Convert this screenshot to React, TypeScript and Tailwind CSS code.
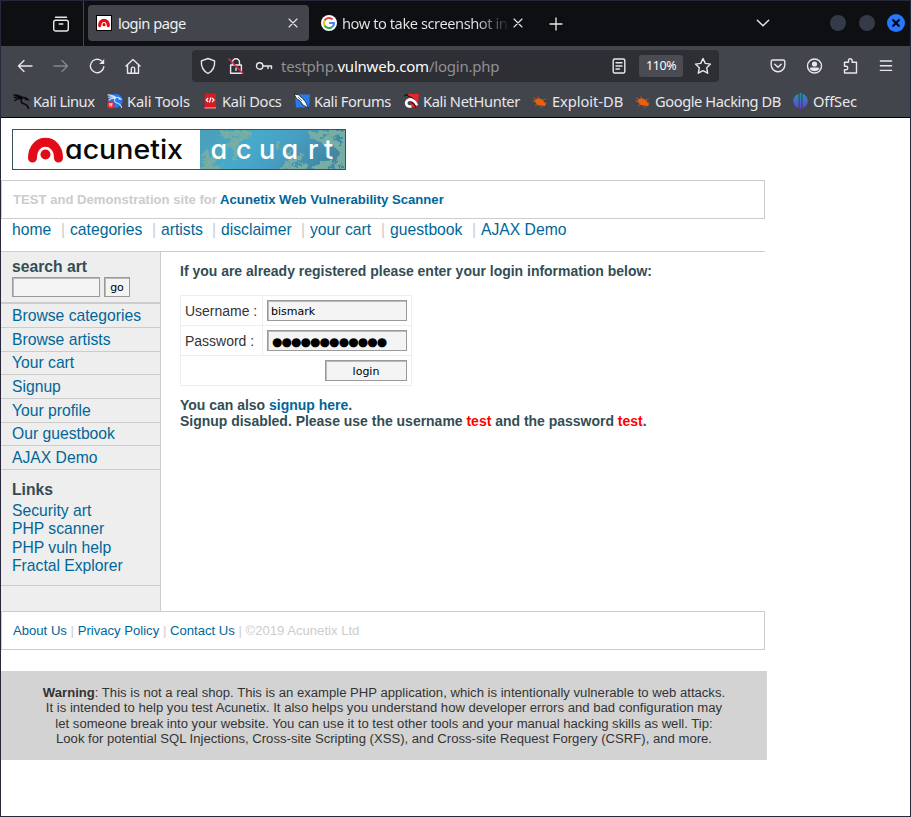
import React from "react";

const UI = "font-['Noto_Sans',sans-serif]";
const ARIAL = "font-['Liberation_Sans',Arial,sans-serif]";

type IconProps = { children: React.ReactNode; className?: string; size?: number };

function Icon({ children, className = "text-[#e8e8ea]", size = 18 }: IconProps) {
  return (
    <svg
      width={size}
      height={size}
      viewBox="0 0 18 18"
      fill="none"
      stroke="currentColor"
      strokeWidth="1.4"
      strokeLinecap="round"
      strokeLinejoin="round"
      className={"shrink-0 " + className}
    >
      {children}
    </svg>
  );
}

function Close() {
  return (
    <Icon>
      <path d="M5 5l8 8M13 5l-8 8" strokeWidth="1.1" />
    </Icon>
  );
}

function AcunetixFavicon() {
  return (
    <svg width="16" height="16" viewBox="0 0 16 16" className="shrink-0">
      <rect width="16" height="16" fill="#000" />
      <rect x="1" y="1" width="14" height="14" fill="#fff" />
      <path d="M3.7 10.6C3.7 3.5 12.3 3.5 12.3 10.6" fill="none" stroke="#e20d18" strokeWidth="3.2" strokeLinecap="round" />
      <circle cx="8" cy="9.7" r="1.6" fill="#e20d18" />
    </svg>
  );
}

function GoogleIcon() {
  return (
    <svg width="16" height="16" viewBox="0 0 16 16" className="shrink-0">
      <circle cx="8" cy="8" r="8" fill="#fff" />
      <g fill="none" strokeWidth="2.1">
        <path d="M3.6 5.5A5 5 0 0 1 11.6 4.5" stroke="#ea4335" />
        <path d="M3.6 10.5A5 5 0 0 1 3.6 5.5" stroke="#fbbc05" />
        <path d="M11.3 11.8A5 5 0 0 1 3.6 10.5" stroke="#34a853" />
        <path d="M8.2 8H13A5 5 0 0 1 11.3 11.8" stroke="#4285f4" />
      </g>
    </svg>
  );
}

function TabStrip() {
  return (
    <div className="flex h-[45px] items-start bg-[#0e0f13]">
      <div className="flex h-[45px] w-[83px] items-center justify-end border-r border-[#43454c] pr-[13px]">
        <Icon>
          <rect x="1.7" y="5.2" width="14.6" height="10.8" rx="2" />
          <path d="M3.5 2.2h11M7.2 9h3.6" />
        </Icon>
      </div>
      <div className="ml-1 mt-1 flex h-9 w-[221px] items-center rounded bg-[#43454c] pl-2 pr-[7px]">
        <AcunetixFavicon />
        <span className="ml-[6px] flex-1 whitespace-nowrap text-[14.67px] tracking-[-0.52px] text-[#f0f0f3]">login page</span>
        <Close />
      </div>
      <div className="ml-3 mt-1 flex h-9 w-[206px] items-center">
        <GoogleIcon />
        <span className="ml-[5px] w-[167px] whitespace-nowrap bg-gradient-to-r from-[#e9e9ec] from-80% to-[#1a1b1f] bg-clip-text text-[14.67px] tracking-[-0.45px] text-transparent">
          how to take screenshot in
        </span>
        <Close />
      </div>
      <div className="ml-5 flex h-[45px] items-center">
        <Icon>
          <path d="M9 3v12M3 9h12" strokeWidth="1.3" />
        </Icon>
      </div>
      <div className="ml-[189px] flex h-[43px] items-center">
        <Icon>
          <path d="M3.3 6.2l5.7 5.6 5.7-5.6" />
        </Icon>
      </div>
      <div className="ml-[58px] flex h-11 items-center gap-[13px]">
        <span className="size-4 rounded-full bg-[#343a47]" />
        <span className="size-4 rounded-full bg-[#343a47]" />
        <span className="-ml-[1px] flex size-[18px] items-center justify-center rounded-full bg-[#2777ff]">
          <svg width="10" height="10" viewBox="0 0 10 10" stroke="#050a18" strokeWidth="2.2">
            <path d="M1.5 1.5l7 7M8.5 1.5l-7 7" />
          </svg>
        </span>
      </div>
    </div>
  );
}

function Toolbar() {
  return (
    <div className="flex h-10 items-center pl-[15px]">
      <div className="flex w-[176px] items-center gap-[18px]">
        <Icon>
          <path d="M16 9H2.5M8 3.5L2.5 9 8 14.5" />
        </Icon>
        <Icon className="text-[#85868b]">
          <path d="M2 9h13.5M10 3.5L15.5 9 10 14.5" />
        </Icon>
        <Icon>
          <path d="M15.8 9.8A6.7 6.7 0 1 1 13.4 3.8" />
          <path d="M16.2 2v5h-5z" fill="currentColor" stroke="none" />
        </Icon>
        <Icon>
          <path d="M2 9l7-6.6L16 9M3.5 8v8.2h11V8M7.3 16v-4.2a1.7 1.7 0 0 1 3.4 0V16" />
        </Icon>
      </div>
      <div className="flex h-8 w-[527px] items-center rounded bg-[#2e2f34] pl-[7px]">
        <Icon>
          <path d="M9 1.5l6.6 2.3c.4 5.5-1.3 10-6.6 12.7C3.7 13.8 2 9.3 2.4 3.8z" />
        </Icon>
        <Icon className="ml-[10px] text-[#e8e8ea]">
          <path d="M5.5 8V5.2a3.5 3.5 0 0 1 7 0V8M3.6 8h10.8v8.3H3.6zM9 11.2v2" />
          <path d="M2 2l14 14.5" stroke="#e22850" strokeWidth="1.6" />
        </Icon>
        <Icon className="ml-[10px] text-[#e8e8ea]">
          <circle cx="4.7" cy="9" r="3.2" />
          <path d="M8 9h8.5v2.5M13 9v2.5" />
        </Icon>
        <span className="ml-[8px] w-[329px] whitespace-nowrap text-[15px] tracking-[-0.22px] text-[#8f9095]">
          testphp.<span className="text-[#fbfbfe]">vulnweb.com</span>/login.php
        </span>
        <Icon>
          <rect x="3.2" y="2" width="11.6" height="14" rx="1.5" />
          <path d="M6 5.8h6M6 9h6M6 12h3.5" />
        </Icon>
        <span className="ml-[11px] flex h-[22px] w-11 items-center justify-center rounded-[3px] bg-[#4b4c52] text-[12.5px] tracking-[-0.4px] text-[#fbfbfe]">110%</span>
        <Icon className="ml-[11px] text-[#e8e8ea]">
          <path d="M9 1.5l2.3 4.9 5.2.7-3.8 3.7 1 5.4L9 13.6l-4.7 2.6 1-5.4L1.5 7.1l5.2-.7z" />
        </Icon>
      </div>
      <div className="ml-[50px] flex items-center gap-[18px]">
        <Icon>
          <path d="M3.8 3h10.4a1.6 1.6 0 0 1 1.6 1.6V8a6.8 6.8 0 0 1-13.6 0V4.6A1.6 1.6 0 0 1 3.8 3zM5.8 7.2L9 10.3l3.2-3.1" />
        </Icon>
        <Icon>
          <circle cx="9.5" cy="9" r="7" />
          <circle cx="9.5" cy="7" r="2.6" fill="currentColor" stroke="none" />
          <path d="M4.8 12a1.5 1.5 0 0 1 1.5-1.4h6.4a1.5 1.5 0 0 1 1.5 1.4 6 6 0 0 1-9.4 0z" fill="currentColor" stroke="none" />
        </Icon>
        <Icon>
          <path d="M3.5 5.2h4V3.5a1.8 1.8 0 0 1 3.6 0v1.7h4.4V16h-12v-3.3h1.6a1.7 1.7 0 0 0 0-3.4H3.5z" />
        </Icon>
        <Icon>
          <path d="M3.4 4h11.2M3.4 8.7h11.2M3.4 13.4h11.2" />
        </Icon>
      </div>
    </div>
  );
}

function Dragon({ color, weight }: { color: string; weight: number }) {
  return (
    <g fill="none" stroke={color} strokeWidth={weight} strokeLinecap="round">
      <path d="M1 2c3 .2 6 .5 8.5 2.8M1.5 4.5c3-.8 5-.5 7.5.8M2 7.500c2-2 4-2.200 6.500-1.700" />
      <path d="M8 5.200c3-1.500 5-.5 7 1.300l-2.500-.2" />
      <path d="M8.700 5.500c-1.500 2.700-.5 4.500 2 5.200 2.600.6 4 1.800 4.800 4.800" />
    </g>
  );
}

function KaliIcon() {
  return (
    <svg width="17" height="17" viewBox="0 0 17 17">
      <Dragon color="#08090b" weight={1.5} />
    </svg>
  );
}
function ToolsIcon() {
  return (
    <svg width="16" height="16" viewBox="0 0 17 17">
      <circle cx="9" cy="8.300" r="7.600" fill="#2777ef" />
      <Dragon color="#d2e8ff" weight={1.1} />
      <circle cx="4" cy="12.800" r="4" fill="#e4262d" />
      <path d="M2 11.500h4M3.200 11.500v3M5 11.500v3" stroke="#fff" strokeWidth=".9" />
    </svg>
  );
}
function DocsIcon() {
  return (
    <svg width="14" height="16" viewBox="0 0 14 16">
      <path d="M0 .5h13v15H0z" fill="#d71920" />
      <path d="M0 .5h1.500v15H0z" fill="#32426e" />
      <path d="M1.500 14.300h11.500v1.200H1.500z" fill="#c9a9ab" />
      <path d="M5.200 5l-2 2 2 2M9 5l2 2-2 2M7.900 4.500l-1.500 5" fill="none" stroke="#fff" strokeWidth="1.200" />
    </svg>
  );
}
function ForumsIcon() {
  return (
    <svg width="17" height="16" viewBox="0 0 17 16">
      <path d="M1 1.500h15l-1 13H2z" fill="#237cf0" />
      <path d="M0 1l4.500.8 4 3.700 3 3.300 3 6.200L9 12 6 8 2.500 5.500z" fill="#fff" stroke="#101318" strokeWidth=".8" />
      <path d="M4 4l4 4" stroke="#101318" strokeWidth=".6" />
    </svg>
  );
}
function NetHunterIcon() {
  return (
    <svg width="17" height="16" viewBox="0 0 17 16">
      <path d="M4 1h12l-1.500 13H9z" fill="#e8242e" />
      <path d="M1 3l3-1.500 1.500 2C9 4 12 6 14.500 13" fill="none" stroke="#111" strokeWidth="1.200" />
      <path d="M8.500 13.500C3 14 2 10 4.500 7.500S12 7 14 12.500" fill="none" stroke="#fff" strokeWidth="2.600" />
      <path d="M8 9.500c2 .3 4 2 5 5" fill="none" stroke="#111" strokeWidth="1.100" />
    </svg>
  );
}
function BugIcon() {
  return (
    <svg width="15" height="15" viewBox="0 0 15 15">
      <g stroke="#e8590c" strokeWidth=".8" fill="none">
        <path d="M1 3.500l4 3M.5 7l4 .5M3 11.500l3-1M6 2.500l1 3M9 12.500l1 1.500M11 6l2.500-1M12 9h2.500" />
      </g>
      <ellipse cx="7.700" cy="8" rx="4.900" ry="3.300" transform="rotate(24 7.700 8)" fill="#ee5f0b" />
      <circle cx="11.800" cy="10.300" r="1.900" fill="#ee5f0b" />
    </svg>
  );
}
function OffSecIcon() {
  return (
    <svg width="15" height="16" viewBox="0 0 15 16">
      <defs>
        <linearGradient id="offsec" x1="0" y1="0" x2="0" y2="1">
          <stop offset="0" stopColor="#149db7" />
          <stop offset="1" stopColor="#6c3bd6" />
        </linearGradient>
      </defs>
      <path d="M5.500.8v14.400C-1.500 12.500-1.500 3.500 5.500.8zM9.500.8v14.400c7-2.700 7-11.700 0-14.400zM6.700 0h1.600v16H6.700z" fill="url(#offsec)" />
    </svg>
  );
}

const bookmarks = [
  { label: "Kali Linux", icon: <KaliIcon />, width: "w-[94px]", iconWidth: "w-[20px]", track: "tracking-[-0.45px]" },
  { label: "Kali Tools", icon: <ToolsIcon />, width: "w-[96px]", iconWidth: "w-[20px]", track: "tracking-[-0.15px]" },
  { label: "Kali Docs", icon: <DocsIcon />, width: "w-[91px]", iconWidth: "w-[19px]", track: "tracking-[-0.3px]" },
  { label: "Kali Forums", icon: <ForumsIcon />, width: "w-[109px]", iconWidth: "w-[20px]", track: "tracking-[-0.36px]" },
  { label: "Kali NetHunter", icon: <NetHunterIcon />, width: "w-[129px]", iconWidth: "w-[20px]", track: "tracking-[-0.36px]" },
  { label: "Exploit-DB", icon: <BugIcon />, width: "w-[103px]", iconWidth: "w-[20px]", track: "tracking-[-0.04px]" },
  { label: "Google Hacking DB", icon: <BugIcon />, width: "w-[158px]", iconWidth: "w-[20px]", track: "tracking-[-0.42px]" },
  { label: "OffSec", icon: <OffSecIcon />, width: "w-[70px]", iconWidth: "w-[20px]", track: "tracking-[-0.15px]" },
];

function Bookmarks() {
  return (
    <div className="flex h-[30px] items-center pl-[12px]">
      {bookmarks.map((b) => (
        <div key={b.label} className={"flex shrink-0 items-center " + b.width}>
          <span className={"shrink-0 " + b.iconWidth}>{b.icon}</span>
          <span className={"whitespace-nowrap text-[14.67px] text-[#e8e8eb] " + b.track}>{b.label}</span>
        </div>
      ))}
    </div>
  );
}

function Banner() {
  return (
    <svg width="334" height="42" viewBox="0 0 334 42" className="block">
      <defs>
        <clipPath id="artClip">
          <rect x="188" y="1" width="145" height="39" />
        </clipPath>
        <linearGradient id="sea" x1="0" y1="0" x2="1" y2=".25">
          <stop offset="0" stopColor="#4b9db9" />
          <stop offset=".4" stopColor="#47aaca" />
          <stop offset=".65" stopColor="#479fc3" />
          <stop offset="1" stopColor="#4287a6" />
        </linearGradient>
        <filter id="rough" filterUnits="userSpaceOnUse" x="170" y="-15" width="180" height="72" colorInterpolationFilters="sRGB">
          <feTurbulence type="fractalNoise" baseFrequency=".25" numOctaves="3" seed="7" />
          <feDisplacementMap in="SourceGraphic" scale="9" xChannelSelector="R" yChannelSelector="G" />
        </filter>
      </defs>
      <rect x=".5" y=".5" width="333" height="40" fill="#fff" stroke="#38525c" />
      <g clipPath="url(#artClip)">
        <rect x="188" y="1" width="145" height="40" fill="url(#sea)" />
        <g filter="url(#rough)" fill="none" stroke="#77aea3" strokeLinecap="round">
          <path d="M194 24l2 18M194 34l11-5M192 40h16" strokeWidth="5.500" />
          <path d="M210 5l12 6 2 18M236 4l-10 7-4 9M215 17l8-3M212 4h26" strokeWidth="4.500" />
          <path d="M265 12l1 7" strokeWidth="2" />
          <path d="M270 41l9-8-2-8M278 34l10-6M278 40l16-3M266 42h28" strokeWidth="4.500" />
          <path d="M300 5l12 8M308 4h28M316 9l10 8 10 10M333 5v38" strokeWidth="6" />
          <path d="M302 42l8-6M308 43l11-11M314 42h21M325 37l6-12" strokeWidth="5.500" />
        </g>
      </g>
      <path d="M20.500 29C20.500 8 46.500 8 46.500 29" fill="none" stroke="#e30b17" strokeWidth="9" strokeLinecap="round" />
      <circle cx="33.500" cy="25.500" r="5" fill="#e30b17" />
      <text x="53" y="30" textLength="118" lengthAdjust="spacingAndGlyphs" fill="#080808" fontFamily="Inter, Lato, sans-serif" fontSize="27" fontWeight="500" style={{ fontFeatureSettings: "'cv11'" }}>
        acunetix
      </text>
      <text x="198.500 224 247 269.500 296 312" y="30" fill="#fff" fontFamily="Inter, Lato, sans-serif" fontSize="27" fontWeight="500" style={{ fontFeatureSettings: "'cv11'" }}>
        acuart
      </text>
    </svg>
  );
}

const nav = [
  ["home", "w-[49px]", "w-[9px]"],
  ["categories", "w-[82px]", "w-[9px]"],
  ["artists", "w-[51px]", "w-[9px]"],
  ["disclaimer", "w-[80px]", "w-[9px]"],
  ["your cart", "w-[71px]", "w-[9px]"],
  ["guestbook", "w-[82px]", "w-[9px]"],
  ["AJAX Demo", "w-[90px]", ""],
];

function Nav() {
  return (
    <div className="flex h-[33px] items-start border-b border-[#ccc] pl-[11px] pt-[2px] text-[15.7px] leading-[18px] text-[#069]">
      {nav.map(([label, width, bar]) => (
        <React.Fragment key={label}>
          <a className={"shrink-0 whitespace-nowrap " + width}>{label}</a>
          {bar && <span className={"shrink-0 text-[#ccc] " + bar}>|</span>}
        </React.Fragment>
      ))}
    </div>
  );
}

const side = [
  ["Browse categories", "h-6 leading-[23px]"],
  ["Browse artists", "h-6 leading-[23px]"],
  ["Your cart", "h-[23px] leading-[21px]"],
  ["Signup", "h-6 leading-[23px]"],
  ["Your profile", "h-6 leading-[23px]"],
  ["Our guestbook", "h-[23px] leading-[21px]"],
  ["AJAX Demo", "h-6 leading-[23px]"],
];

const FIELD = "border border-[#999] bg-[#f4f4f4] pt-[2px] font-['DejaVu_Sans',sans-serif] text-[11px] text-black shadow-[inset_1px_1px_0_#bbb]";

function Sidebar() {
  return (
    <div className="h-[359px] w-40 border-r border-[#ccc] bg-[#eee] text-[15.7px] text-[#069]">
      <div className="h-[52px] border-b-2 border-[#ccc] pl-[11px] pt-[6px]">
        <div className="h-[19px] font-bold leading-[18px] text-[#334d55]">search art</div>
        <div className="flex gap-1">
          <div className={"h-5 w-[88px] " + FIELD} />
          <div className={"flex h-5 w-[26px] items-center justify-center " + FIELD}>go</div>
        </div>
      </div>
      {side.map(([label, h]) => (
        <div key={label} className={"border-b border-[#ccc] pl-[11px] " + h}>
          {label}
        </div>
      ))}
      <div className="h-[116px] border-b border-[#ccc] pl-[11px] pt-[10px]">
        <div className="h-[22px] font-bold leading-[19px] text-[#334d55]">Links</div>
        <div className="leading-[18.4px]">
          <div>Security art</div>
          <div>PHP scanner</div>
          <div>PHP vuln help</div>
          <div>Fractal Explorer</div>
        </div>
      </div>
    </div>
  );
}

function Content() {
  return (
    <div className="pl-[19px] pt-[11px] text-[13.97px] font-bold leading-4 text-[#334d55]">
      <div className="h-8">If you are already registered please enter your login information below:</div>
      <div className="grid w-[232px] grid-cols-[81px_148px] gap-px border border-[#eee] bg-[#eee] font-normal text-[#333]">
        <div className="flex h-[29px] items-center bg-white pl-1">Username :</div>
        <div className="flex h-[29px] items-center bg-white pl-1">
          <div className={"flex h-[21px] w-[140px] items-center pl-[3px] " + FIELD}>bismark</div>
        </div>
        <div className="flex h-[29px] items-center bg-white pl-1">Password :</div>
        <div className="flex h-[29px] items-center bg-white pl-1">
          <div className={"flex h-[21px] w-[140px] items-center pl-1 " + FIELD}>
            <span className="text-[12px] tracking-[-0.95px]">●●●●●●●●●●●●</span>
          </div>
        </div>
        <div className="col-span-2 flex h-[29px] items-center justify-end bg-white pr-1">
          <div className={"flex h-[21px] w-[82px] items-center justify-center " + FIELD}>login</div>
        </div>
      </div>
      <div className="mt-[11px]">
        You can also <a className="text-[#069]">signup here</a>.
      </div>
      <div>
        Signup disabled. Please use the username <span className="text-[#f00]">test</span> and the password{" "}
        <span className="text-[#f00]">test</span>.
      </div>
    </div>
  );
}

export default function App() {
  return (
    <div className="flex h-[817px] w-[911px] flex-col overflow-hidden border border-[#27283a] bg-white">
      <header className={UI}>
        <TabStrip />
        <div className="h-[72px] border-b border-black bg-[#43454c]">
          <Toolbar />
          <Bookmarks />
        </div>
      </header>
      <main className={"w-[764px] " + ARIAL}>
        <div className="h-[62px] pl-[11px] pt-[11px]">
          <Banner />
        </div>
        <div className="flex h-[39px] items-center border border-[#ccc] pl-[11px] text-[13.11px] font-bold text-[#ccc]">
          <span>
            TEST and Demonstration site for <a className="text-[#069]">Acunetix Web Vulnerability Scanner</a>
          </span>
        </div>
        <Nav />
        <div className="flex">
          <Sidebar />
          <Content />
        </div>
        <div className="flex h-[39px] items-center whitespace-pre border border-[#ccc] pl-[11px] text-[13.11px] text-[#ccc]">
          <a className="text-[#069]">About Us</a> | <a className="text-[#069]">Privacy Policy</a> | <a className="text-[#069]">Contact Us</a> | ©2019 Acunetix Ltd
        </div>
        <div className="mt-[21px] h-[89px] w-[766px] bg-[#d3d3d3] pt-[14px] text-center text-[13.12px] leading-[15.4px] text-[#333]">
          <div><b>Warning</b>: This is not a real shop. This is an example PHP application, which is intentionally vulnerable to web attacks.</div>
          <div>It is intended to help you test Acunetix. It also helps you understand how developer errors and bad configuration may</div>
          <div>let someone break into your website. You can use it to test other tools and your manual hacking skills as well. Tip:</div>
          <div>Look for potential SQL Injections, Cross-site Scripting (XSS), and Cross-site Request Forgery (CSRF), and more.</div>
        </div>
      </main>
    </div>
  );
}
